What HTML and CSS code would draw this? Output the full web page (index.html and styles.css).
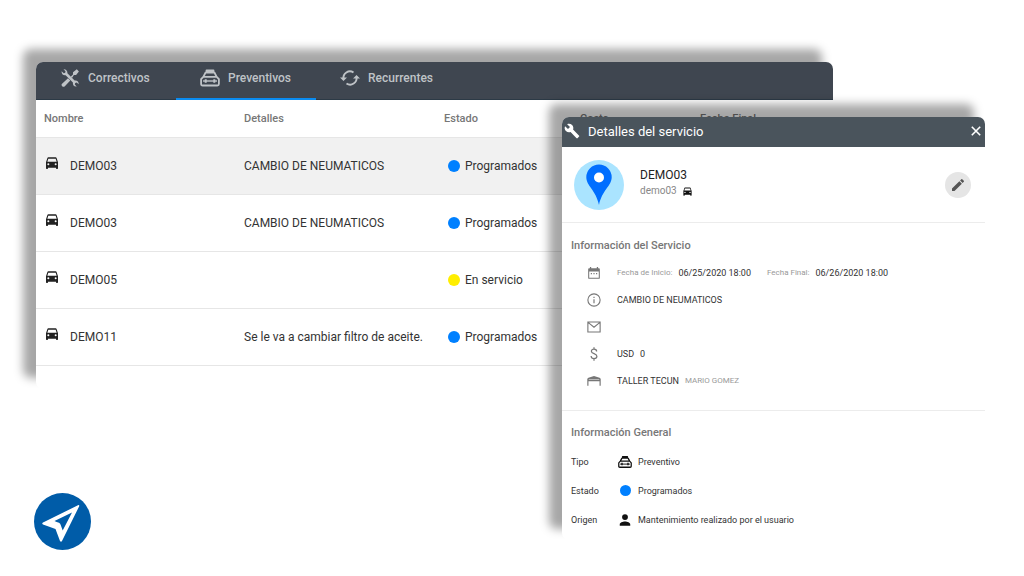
FILE: index.html
```html
<!DOCTYPE html>
<html lang="es">
<head>
<meta charset="utf-8">
<meta name="viewport" content="width=device-width, initial-scale=1">
<title>Mantenimientos</title>
<link rel="stylesheet" href="styles.css">
</head>
<body>
<svg class="sprite" aria-hidden="true">
  <symbol id="car" viewBox="0 0 24 24"><path fill-rule="evenodd" d="M18.900 4.500c-.2-.6-.8-1-1.400-1h-11c-.7 0-1.200.4-1.400 1L3 11v9c0 .6.400 1 1 1h1c.6 0 1-.400 1-1v-1h12v1c0 .6.400 1 1 1h1c.6 0 1-.400 1-1v-9zM6.500 15.500a1.500 1.500 0 1 1 0-3 1.500 1.500 0 0 1 0 3zm11 0a1.500 1.500 0 1 1 0-3 1.500 1.500 0 0 1 0 3zM5 10l1.500-4.500h11L19 10z"/></symbol>
  <symbol id="carbox" viewBox="0 0 20 18"><g fill="none" stroke="currentColor" stroke-width="1.800" stroke-linejoin="round"><path d="M3.300 7.800L5.600 3.500h8.800L16.700 7.800M6.500 3.500V1.500h7v2M3.300 7.800h13.400L18.900 10.200v4.800q0 1.500-1.500 1.500H2.600q-1.500 0-1.500-1.500V10.200z"/><path d="M3 12h14" stroke-width="1.400"/><path d="M5.700 10.200v3.600M14.300 10.200v3.600" stroke-width="2"/></g></symbol>
</svg>
<main class="stage">
  <section class="board">
    <nav class="tabs">
      <button class="tab" type="button">
        <svg class="tab-icon" viewBox="0 0 18 18"><path fill="currentColor" d="M.6 2.200L2.800 4.200 4.200 3.800 4.500 2.200 2.500.2C5 .1 6.800 1.800 6.400 4.300L13.600 11.500C16 11 17.900 12.900 17.700 15.200L15.700 13.500 14.200 14 13.800 15.500 15.700 17.500C13.200 17.900 11.500 16 11.900 13.500L4.600 6.200C2.200 6.600.3 4.700.6 2.200z"/><path fill="currentColor" d="M.8 15L7 9.300 9.300 11.600 3.600 17.500Q2.300 18.300 1.200 17.200.1 16.100.8 15zM9.700 7.700L12 5.400V3.200L15.800.3 17.900 2.400 15.100 6H12.900L11 8.900z"/></svg>
        <span>Correctivos</span>
      </button>
      <button class="tab tab-active" type="button">
        <svg class="tab-icon"><use href="#carbox"/></svg>
        <span>Preventivos</span>
      </button>
      <button class="tab" type="button">
        <svg class="tab-icon" viewBox="0 0 20 18"><g fill="none" stroke="currentColor" stroke-width="1.900"><path d="M3.500 10A6.500 6.500 0 0 1 13.500 3.500M16.500 8A6.500 6.500 0 0 1 6.500 14.500"/></g><path fill="currentColor" d="M0 8.500h7L3.500 12zM13 9.500h7L16.500 6z"/></svg>
        <span>Recurrentes</span>
      </button>
    </nav>
    <table class="services">
      <thead>
        <tr><th class="col-name">Nombre</th><th class="col-detail">Detalles</th><th class="col-state">Estado</th><th class="col-cost">Costo</th><th>Fecha Final</th></tr>
      </thead>
      <tbody>
        <tr class="selected"><td><div class="unit"><svg class="unit-icon"><use href="#car"/></svg>DEMO03</div></td><td>CAMBIO DE NEUMATICOS</td><td><div class="state"><span class="dot"></span>Programados</div></td><td></td><td></td></tr>
        <tr><td><div class="unit"><svg class="unit-icon"><use href="#car"/></svg>DEMO03</div></td><td>CAMBIO DE NEUMATICOS</td><td><div class="state"><span class="dot"></span>Programados</div></td><td></td><td></td></tr>
        <tr><td><div class="unit"><svg class="unit-icon"><use href="#car"/></svg>DEMO05</div></td><td></td><td><div class="state"><span class="dot dot-yellow"></span>En servicio</div></td><td></td><td></td></tr>
        <tr><td><div class="unit"><svg class="unit-icon"><use href="#car"/></svg>DEMO11</div></td><td>Se le va a cambiar filtro de aceite.</td><td><div class="state"><span class="dot"></span>Programados</div></td><td></td><td></td></tr>
      </tbody>
    </table>
  </section>

  <svg class="logo" viewBox="0 0 57 57" role="img" aria-label="Navegación"><circle cx="28.500" cy="28.500" r="28.500" fill="#005ca8"/><path fill="#fff" fill-rule="evenodd" d="M44.500 12q1-.2.700 1.200L28 48q-1 1.500-2 0L21.500 36 9 31.500q-1.500-1 0-2zM38 19.500L20.500 28q2 1 4.500 1.700 1.500.8 1.700 2.300l2 5.500z"/></svg>

  <aside class="details">
    <header class="details-head">
      <svg class="wrench" viewBox="0 0 24 24"><path fill="currentColor" d="M22.700 19l-9.100-9.100c.9-2.300.4-5-1.500-6.900-2-2-5-2.400-7.400-1.300L9 6 6 9 1.600 4.700C.4 7.100.9 10.100 2.900 12.100c1.900 1.900 4.600 2.400 6.900 1.500l9.100 9.100c.4.400 1 .4 1.400 0l2.300-2.300c.5-.4.5-1.100.1-1.400z"/></svg>
      <h1 class="details-title">Detalles del servicio</h1>
      <button class="close" type="button" aria-label="Cerrar"><svg viewBox="0 0 10 10"><path d="M.8.800l8.400 8.400M9.200.800L.8 9.200" stroke="currentColor" stroke-width="1.600"/></svg></button>
    </header>
    <div class="profile">
      <svg class="avatar" viewBox="0 0 50 50"><circle cx="25" cy="25" r="25" fill="#aae4ff"/><path fill="#006eff" d="M25 4.500a12.700 12.700 0 0 0-12.700 12.700C12.300 26 22 30 25 45 28 30 37.700 26 37.700 17.200A12.700 12.700 0 0 0 25 4.500z"/><circle cx="25" cy="17.500" r="5" fill="#fff"/></svg>
      <div class="profile-text">
        <div class="profile-name">DEMO03</div>
        <div class="profile-sub">demo03 <svg class="mini-car"><use href="#car"/></svg></div>
      </div>
      <button class="edit" type="button" aria-label="Editar"><svg viewBox="0 0 24 24"><path fill="currentColor" d="M3 17.250V21h3.750L17.810 9.940l-3.750-3.750zM20.710 7.040a1 1 0 0 0 0-1.410l-2.340-2.340a1 1 0 0 0-1.410 0l-1.830 1.830 3.750 3.750z"/></svg></button>
    </div>
    <section class="service">
      <h2 class="section-title">Información del Servicio</h2>
      <ul class="facts">
        <li class="fact"><svg class="fact-icon" viewBox="0 0 24 24"><path fill="currentColor" fill-rule="evenodd" d="M5 4V1.500h2.200V4h9.600V1.500H19V4h1.500q1.500 0 1.500 1.500v15q0 1.500-1.500 1.500h-17Q2 22 2 20.500v-15Q2 4 3.500 4zm-1.200 5.500v10.700h16.400V9.500zM6.500 12h2v2h-2zm4.500 0h2v2h-2zm4.500 0h2v2h-2z"/></svg><span class="hint">Fecha de Inicio:</span><span class="date">06/25/2020 18:00</span><span class="hint">Fecha Final:</span><span class="date">06/26/2020 18:00</span></li>
        <li class="fact"><svg class="fact-icon" viewBox="0 0 24 24"><circle cx="12" cy="12" r="10.500" fill="none" stroke="currentColor" stroke-width="1.900"/><path fill="currentColor" d="M11 6.500h2v2.200h-2zM11 10.500h2v7h-2z"/></svg><span>CAMBIO DE NEUMATICOS</span></li>
        <li class="fact"><svg class="fact-icon" viewBox="0 0 24 24"><path fill="none" stroke="currentColor" stroke-width="1.900" d="M1.500 3.500h21v17h-21zM2 4l3.500 3 6.500 5.500L18.500 7 22 4"/></svg></li>
        <li class="fact"><svg class="fact-icon" viewBox="0 0 24 24"><path fill="none" stroke="currentColor" stroke-width="2.100" d="M16.500 7.500c0-2.500-1.800-3.800-4.500-3.800S7.500 5 7.500 7.300c0 5 9.500 3.200 9.500 8.600 0 2.400-2 3.900-5 3.900s-5-1.500-5-4.200M12 .5v3.200M12 19.800V23.500"/></svg><span>USD</span><span>0</span></li>
        <li class="fact"><svg class="fact-icon" viewBox="0 0 24 24"><path fill="currentColor" d="M.5 20V8.500Q1 7 2.500 6.500L12 3.500l9.500 3q1.500.5 2 2V20h-2v-7.500H2.500V20zM3 9.500h18V8.700H3z"/></svg><span>TALLER TECUN</span><span class="hint">MARIO GOMEZ</span></li>
      </ul>
    </section>
    <section class="general">
      <h2 class="section-title">Información General</h2>
      <dl class="props">
        <dt>Tipo</dt><dd><svg class="prop-icon"><use href="#carbox"/></svg>Preventivo</dd>
        <dt>Estado</dt><dd><span class="prop-icon"><span class="dot dot-small"></span></span>Programados</dd>
        <dt>Origen</dt><dd><svg class="prop-icon" viewBox="0 0 24 24"><path fill="currentColor" d="M12 12a5 5 0 1 0 0-10 5 5 0 0 0 0 10zm0 2.500C8 14.500 3 16.300 3 19.500V22h18v-2.500c0-3.200-5-5-9-5z"/></svg>Mantenimiento realizado por el usuario</dd>
      </dl>
    </section>
  </aside>
</main>
</body>
</html>
```

FILE: styles.css
```css
* { box-sizing: border-box; }
body { margin: 0; background: #fff; color: #333; font-family: Roboto, "Liberation Sans", sans-serif; }
button { border: 0; padding: 0; background: none; color: inherit; font: inherit; cursor: pointer; }
h1, h2, ul, dl, dd { margin: 0; padding: 0; }
.sprite { position: absolute; width: 0; height: 0; }

.stage { position: relative; min-height: 100vh; padding: 62px 191px 24px 36px; }
.board { min-height: 327px; border-radius: 7px; background: #fff; box-shadow: -12px -12px 10px 1px rgba(0, 0, 0, .35); }
.tabs { display: flex; height: 38px; border-radius: 7px 7px 0 0; border-bottom: 1px solid #2c3a46; background: #3f4650; color: #bfc3c7; }
.tab { display: flex; align-items: center; gap: 8px; width: 140px; margin-bottom: -1px; padding: 0 0 4px 24px; border-bottom: 2px solid transparent; font-size: 12px; font-weight: 500; }
.tab-active { border-bottom-color: #0a8cf0; }
.tab-icon { width: 20px; height: 18px; }

.services { width: 100%; border-collapse: collapse; table-layout: fixed; font-size: 12px; }
.services th { height: 37px; padding: 0 0 0 8px; border-bottom: 1px solid #e6e6e6; color: #777; font-size: 11px; font-weight: 500; text-align: left; }
.services td { height: 57px; padding: 0 0 0 8px; border-bottom: 1px solid #e6e6e6; white-space: nowrap; }
.selected { background: #f1f1f1; }
.col-name, .col-detail { width: 200px; }
.col-state { width: 136px; }
.col-cost { width: 120px; }
.unit { display: flex; align-items: center; gap: 10px; }
.unit-icon { width: 16px; height: 16px; margin-bottom: 6px; fill: #222; }
.state { display: flex; align-items: center; gap: 5px; padding-left: 4px; }
.dot { width: 12px; height: 12px; border-radius: 50%; background: #0080ff; }
.dot-yellow { background: #ffee00; }
.dot-small { width: 11px; height: 11px; }

.logo { position: absolute; left: 34px; bottom: 26px; width: 57px; height: 57px; }

.details { position: absolute; top: 117px; left: 562px; right: 39px; min-height: 419px; border-radius: 7px; background: #fff; box-shadow: -12px -12px 10px 1px rgba(0, 0, 0, .35); font-size: 9px; }
.details-head { display: flex; align-items: center; gap: 8px; height: 30px; padding: 0 4px 2px 2px; border-radius: 7px 7px 0 0; background: #4a545c; color: #fff; }
.wrench { width: 16px; height: 16px; }
.details-title { flex: 1; font-size: 13px; font-weight: 400; }
.close { display: flex; width: 10px; height: 10px; }
.close svg { width: 10px; height: 10px; }
.profile { display: flex; align-items: center; gap: 16px; height: 76px; padding: 0 14px 0 12px; border-bottom: 1px solid #ececec; }
.avatar { width: 50px; height: 50px; }
.profile-text { flex: 1; line-height: 16px; padding-bottom: 3px; }
.profile-name { color: #222; font-size: 12px; }
.profile-sub { display: flex; align-items: center; gap: 5px; color: #888; font-size: 10px; }
.mini-car { width: 11px; height: 11px; fill: #111; }
.edit { display: flex; align-items: center; justify-content: center; width: 26px; height: 26px; border-radius: 50%; background: #e5e5e5; color: #555; }
.edit svg { width: 16px; height: 16px; }
.section-title { color: #777; font-size: 11px; font-weight: 500; line-height: 14px; }
.service { padding: 16px 9px; border-bottom: 1px solid #ececec; }
.facts { padding-left: 16px; padding-top: 6px; list-style: none; }
.fact { display: flex; align-items: center; gap: 6px; height: 27px; }
.fact-icon { width: 14px; height: 14px; margin-right: 10px; color: #777; }
.hint { color: #999; font-size: 8px; }
.date { margin-right: 10px; }
.general { padding: 15px 9px 6px; }
.props { display: grid; grid-template-columns: 47px 1fr; grid-auto-rows: 29px; align-items: center; padding-top: 7px; }
.props dd { display: flex; align-items: center; gap: 6px; }
.prop-icon { display: flex; align-items: center; justify-content: center; width: 14px; height: 14px; color: #111; }
```
